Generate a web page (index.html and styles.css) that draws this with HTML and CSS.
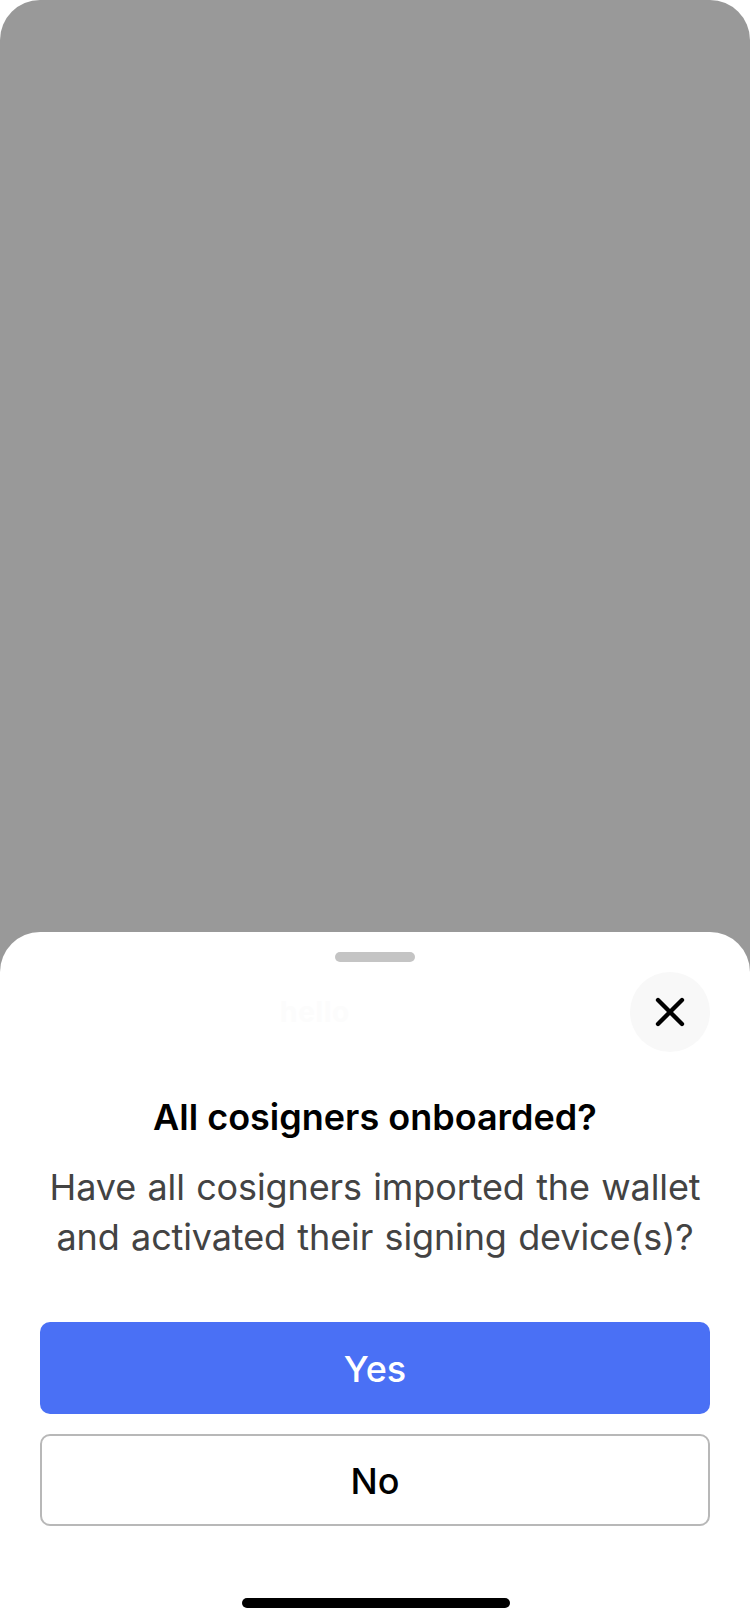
FILE: index.html
```html
<!DOCTYPE html>
<html lang="en">
<head>
<meta charset="utf-8">
<title>All cosigners onboarded?</title>
<link rel="stylesheet" href="styles.css">
</head>
<body>
<div class="screen">
  <section class="sheet">
    <div class="handle"></div>
    <header class="header">
      <span class="header-label">hello</span>
      <button class="close" aria-label="Close">
        <svg width="30" height="30" viewBox="-1 -1 30 30" fill="none" stroke="#000" stroke-width="4.3" stroke-linecap="round"><path d="M2 2 26 26M26 2 2 26"/></svg>
      </button>
    </header>
    <h1 class="title">All cosigners onboarded?</h1>
    <p class="message">Have all cosigners imported the wallet<br>and activated their signing device(s)?</p>
    <div class="actions">
      <button class="button primary">Yes</button>
      <button class="button secondary">No</button>
    </div>
    <div class="home-indicator"></div>
  </section>
</div>
</body>
</html>
```

FILE: styles.css
```css
* { box-sizing: border-box; }
body {
  margin: 0;
  background: #fff;
  font-family: Inter, "Liberation Sans", sans-serif;
}
.screen {
  display: flex;
  flex-direction: column;
  justify-content: flex-end;
  height: 1624px;
  width: 750px;
  background: #999;
  border-radius: 40px 40px 0 0;
}
.sheet {
  display: flex;
  flex-direction: column;
  height: 692px;
  padding: 20px 40px 16px;
  background: #fff;
  border-radius: 40px 40px 0 0;
}
.handle {
  align-self: center;
  width: 80px;
  height: 10px;
  border-radius: 5px;
  background: #c4c4c4;
}
.header {
  display: flex;
  align-items: center;
  justify-content: space-between;
  height: 80px;
  margin-top: 10px;
}
.header-label {
  padding-left: 240px;
  font-size: 28px;
  font-weight: 700;
  letter-spacing: 0.7px;
  color: #fcfcfc;
}
.close {
  display: grid;
  place-items: center;
  width: 80px;
  height: 80px;
  padding: 0;
  border: 0;
  border-radius: 50%;
  background: #f8f8f8;
}
.title {
  margin: 40px 0 0;
  font-size: 36px;
  font-weight: 600;
  line-height: 50px;
  text-align: center;
  color: #000;
}
.message {
  margin: 20px -20px 0;
  font-size: 36px;
  font-weight: 400;
  letter-spacing: -0.12px;
  word-spacing: 1.4px;
  line-height: 50px;
  text-align: center;
  color: #434343;
}
.actions {
  display: grid;
  gap: 20px;
  margin-top: 60px;
}
.button {
  height: 92px;
  padding: 2px 0 0;
  border: 0;
  border-radius: 10px;
  font: 500 36px Inter, "Liberation Sans", sans-serif;
}
.primary {
  background: #4a70f5;
  color: #fff;
}
.secondary {
  border: 2px solid #b8b8b8;
  background: #fff;
  color: #000;
}
.home-indicator {
  width: 268px;
  height: 10px;
  margin: auto 0 0 202px;
  border-radius: 5px;
  background: #000;
}
```
